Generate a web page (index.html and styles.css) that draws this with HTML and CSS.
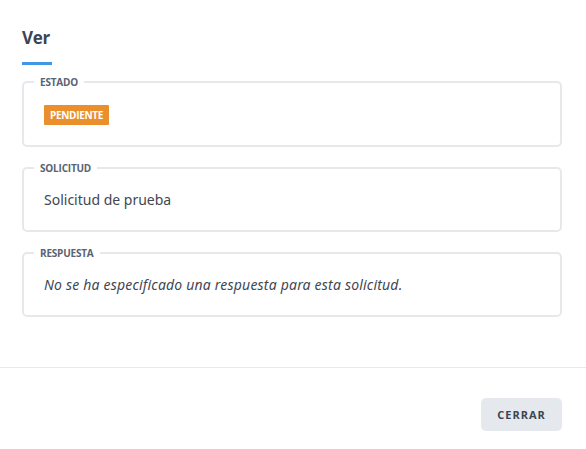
FILE: index.html
```html
<!DOCTYPE html>
<html lang="es">
<head>
<meta charset="utf-8">
<title>Ver</title>
<link rel="stylesheet" href="styles.css">
</head>
<body>
<div class="modal">
  <div class="modal-body">
    <h2 class="title">Ver</h2>
    <div class="title-bar"></div>
    <fieldset class="field field-estado">
      <legend>Estado</legend>
      <span class="badge">Pendiente</span>
    </fieldset>
    <fieldset class="field">
      <legend>Solicitud</legend>
      <p class="value">Solicitud de prueba</p>
    </fieldset>
    <fieldset class="field">
      <legend>Respuesta</legend>
      <p class="value value-empty">No se ha especificado una respuesta para esta solicitud.</p>
    </fieldset>
  </div>
  <div class="modal-footer">
    <button class="btn">Cerrar</button>
  </div>
</div>
</body>
</html>
```

FILE: styles.css
```css
* { box-sizing: border-box; }
html, body { margin: 0; padding: 0; background: #ffffff; }
body {
  font-family: "Noto Sans", "Open Sans", sans-serif;
  color: #3f4753;
}
.modal { width: 586px; }
.modal-body {
  padding: 26px 24px 50px 22px;
  border-bottom: 1px solid #e8e9eb;
}
.title {
  margin: 0;
  font-family: "Open Sans", "Noto Sans", sans-serif;
  font-weight: 700;
  font-size: 17px;
  line-height: 24px;
  color: #3b4555;
  letter-spacing: -0.3px;
}
.title-bar {
  width: 30px;
  height: 3px;
  background: #3f97e6;
  margin-top: 12px;
  margin-bottom: 10px;
}
.field {
  margin: 0 0 14px 0;
  border: 2px solid #e6e8ec;
  border-radius: 5px;
  padding: 15px 20px 20px;
  min-width: 0;
}
.field:last-child { margin-bottom: 0; }
.field legend {
  margin-left: -10px;
  padding: 0 6px;
  font-family: "Open Sans", "Noto Sans", sans-serif;
  font-weight: 700;
  font-size: 10px;
  line-height: 14px;
  text-transform: uppercase;
  color: #5a6372;
  letter-spacing: -0.2px;
}
.field-estado { padding-top: 16px; padding-bottom: 18px; }
.badge {
  display: inline-block;
  height: 20px;
  padding: 0 6px;
  background: #e98f2c;
  color: #ffffff;
  font-family: "Open Sans", "Noto Sans", sans-serif;
  font-weight: 700;
  font-size: 10px;
  line-height: 20px;
  text-transform: uppercase;
  border-radius: 1px;
  letter-spacing: -0.3px;
  vertical-align: top;
}
.value {
  margin: 0;
  font-size: 14px;
  line-height: 20px;
  color: #3f4753;
}
.value-empty { font-style: italic; letter-spacing: 0.2px; }
.modal-footer {
  display: flex;
  justify-content: flex-end;
  padding: 30px 24px 0 0;
}
.btn {
  width: 81px;
  height: 33px;
  border: none;
  border-radius: 5px;
  background: #e5e8ed;
  color: #3b4555;
  font-family: "Open Sans", "Noto Sans", sans-serif;
  font-weight: 700;
  font-size: 11px;
  letter-spacing: 1px;
  text-transform: uppercase;
  cursor: pointer;
}
```
